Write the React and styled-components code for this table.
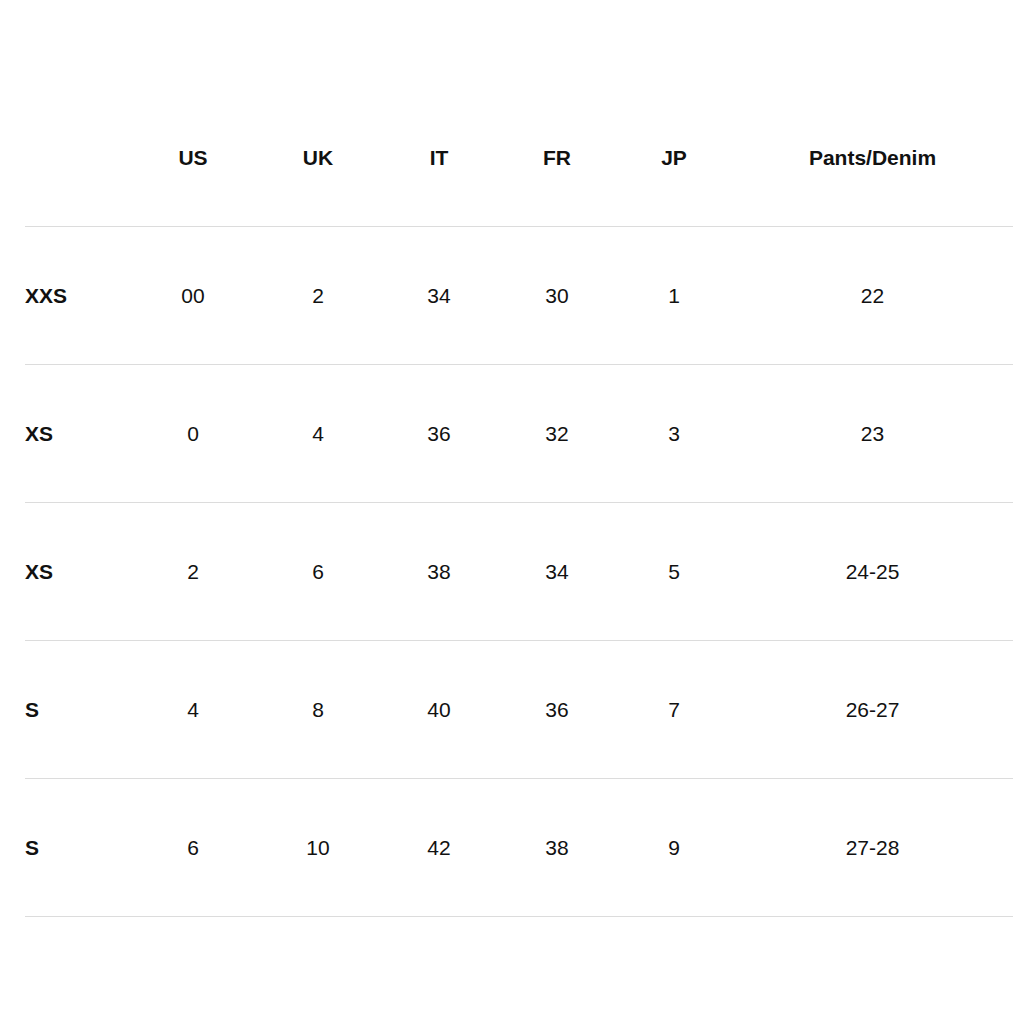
import React from 'react'
import styled, { createGlobalStyle } from 'styled-components'

const GlobalStyle = createGlobalStyle`
  body {
    margin: 0;
    background: #fff;
    font-family: 'Liberation Sans', Arial, Helvetica, sans-serif;
    color: #111;
  }
`

const Page = styled.div`
  width: 1024px;
  height: 1024px;
  padding: 89px 11px 0 25px;
  box-sizing: border-box;
`

const Row = styled.div`
  display: grid;
  grid-template-columns: 105px 126px 124px 118px 118px 116px 281px;
  align-items: center;
  height: 138px;
  padding-top: 1px;
  box-sizing: border-box;
  border-bottom: 1.5px solid #dcdcdc;
`

const Cell = styled.div`
  text-align: ${(p) => (p.$label ? 'left' : 'center')};
  font-size: 21px;
  font-weight: ${(p) => (p.$bold ? 700 : 400)};
`

const columns = ['US', 'UK', 'IT', 'FR', 'JP', 'Pants/Denim']

const sizes = [
  ['XXS', '00', '2', '34', '30', '1', '22'],
  ['XS', '0', '4', '36', '32', '3', '23'],
  ['XS', '2', '6', '38', '34', '5', '24-25'],
  ['S', '4', '8', '40', '36', '7', '26-27'],
  ['S', '6', '10', '42', '38', '9', '27-28'],
]

export default function App() {
  return (
    <>
      <GlobalStyle />
      <Page>
        <Row>
          <Cell $label />
          {columns.map((c) => (
            <Cell key={c} $bold>
              {c}
            </Cell>
          ))}
        </Row>
        {sizes.map((row, i) => (
          <Row key={i}>
            {row.map((v, j) => (
              <Cell key={j} $label={j === 0} $bold={j === 0}>
                {v}
              </Cell>
            ))}
          </Row>
        ))}
      </Page>
    </>
  )
}
